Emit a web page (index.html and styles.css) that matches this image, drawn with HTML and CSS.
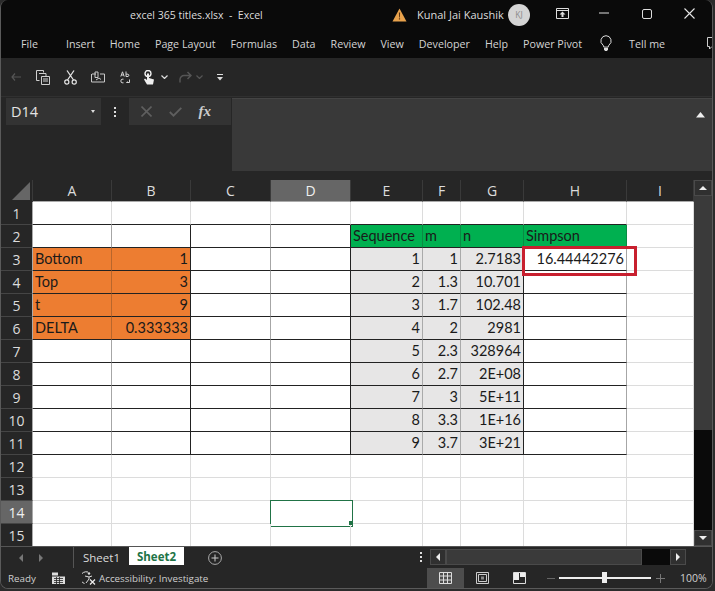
FILE: index.html
```html
<!DOCTYPE html>
<html lang="en">
<head>
<meta charset="utf-8">
<title>excel 365 titles.xlsx - Excel</title>
<link rel="stylesheet" href="styles.css">
</head>
<body>
<div class="window">
  <header class="titlebar">
    <span class="doc-title">excel 365 titles.xlsx&nbsp; -&nbsp; Excel</span>
    <svg class="warn" viewBox="0 0 14 14" width="15" height="14"><path d="M7 0.5L14 13.5H0z" fill="#e8a24c"/><path d="M6.4 4.5h1.2l-.2 5h-.8zM6.4 10.3h1.2v1.3H6.4z" fill="#5a3310"/></svg>
    <span class="user">Kunal Jai Kaushik</span>
    <span class="avatar">KJ</span>
    <svg class="win-ribbon" viewBox="0 0 13 11" width="13" height="11"><path d="M.5.5h12v10H.5zM.5 2.5h12" fill="none" stroke="#ddd"/><path d="M6.5 3.5L9.5 6.5H7.5V9h-2V6.5H3.5z" fill="#ddd"/></svg>
    <svg class="win-min" viewBox="0 0 10 2" width="10" height="2"><path d="M0 1h10" stroke="#ddd"/></svg>
    <svg class="win-max" viewBox="0 0 10 10" width="10" height="10"><rect x=".5" y=".5" width="9" height="9" rx="1.5" fill="none" stroke="#ddd"/></svg>
    <svg class="win-close" viewBox="0 0 11 11" width="11" height="11"><path d="M.5.5l10 10M10.5.5l-10 10" stroke="#e4e4e4" stroke-width="1.1"/></svg>
  </header>
  <nav class="menubar">
    <span class="menu-file">File</span>
    <span>Insert</span><span>Home</span><span>Page Layout</span><span>Formulas</span><span>Data</span><span>Review</span><span>View</span><span>Developer</span><span>Help</span><span>Power Pivot</span>
    <svg class="bulb" viewBox="0 0 12 17" width="12" height="17"><path d="M6 .7a5.2 5.2 0 0 0-3 9.4c.5.5.7 1 .8 2h4.4c.1-1 .3-1.500.8-2A5.2 5.2 0 0 0 6 .7z" fill="none" stroke="#ddd"/><path d="M4 13h4v1.500l-1 1.500H5l-1-1.500z" fill="#ddd"/></svg>
    <span class="tell">Tell me</span>
    <svg class="comment" viewBox="0 0 15 13" width="15" height="13"><path d="M.5.5h14v9H5l-2.500 2.500V9.500H.5z" fill="none" stroke="#ccc"/></svg>
  </nav>
  <div class="qat">
    <svg class="q-back" viewBox="0 0 10 8" width="10" height="8"><path d="M4 .5L1 4l3 3.500M1 4h9" fill="none" stroke="#555" stroke-width="1.200"/></svg>
    <svg class="q-paste" viewBox="0 0 14 15" width="14" height="15"><path d="M.5.500h7v2M.5.500v10h3M3 3.500h5l2 0v3M5.500 6.500h8v8h-8zM7 9h5M7 11h5" fill="none" stroke="#cfcfcf"/></svg>
    <svg class="q-cut" viewBox="0 0 13 15" width="13" height="15"><path d="M3 .5l6.500 9.500M10 .5L3.500 10" stroke="#e4e4e4" stroke-width="1.300" fill="none"/><circle cx="2.800" cy="12" r="2.100" fill="none" stroke="#e4e4e4" stroke-width="1.200"/><circle cx="10.200" cy="12" r="2.100" fill="none" stroke="#e4e4e4" stroke-width="1.200"/></svg>
    <svg class="q-mail" viewBox="0 0 14 12" width="14" height="12"><path d="M1 3h4M9 3h4.500v8H.5V3M5 9l3-2 2 1.500" fill="none" stroke="#c8c8c8"/><path d="M4 1h3v5.500H4z" fill="none" stroke="#c8c8c8"/></svg>
    <svg class="q-abc" viewBox="0 0 10 13" width="10" height="13"><path d="M.8 5.500l1.700-4.700 1.700 4.700M1.300 4h2.400M6 .5v5M6 3.200h2a1.200 1.200 0 0 1 0 2.300H6M3.500 8.200h-1.500c-1.500 0-1.500 3.600 0 3.600h1.500M9.500 8.500v3H6.500l1-1" fill="none" stroke="#d4d4d4"/></svg>
    <svg class="q-touch" viewBox="0 0 11 15" width="11" height="15"><circle cx="5" cy="3.500" r="3" fill="none" stroke="#eee" stroke-width="1.400"/><path d="M4 3.500v6.500L2 8.500 1 9.500l3 5h6l1-5-5-1.500V3.500z" fill="#eee"/></svg>
    <svg class="q-chev" viewBox="0 0 7 4" width="7" height="4"><path d="M.5.500L3.500 3.500 6.500.500" fill="none" stroke="#ddd" stroke-width="1.200"/></svg>
    <svg class="q-redo" viewBox="0 0 14 12" width="14" height="12"><path d="M13 4.500H6a4 4 0 0 0-4 4v3M9.500 1l3.500 3.500L9.500 8" fill="none" stroke="#555" stroke-width="1.500"/></svg>
    <svg class="q-chev2" viewBox="0 0 7 4" width="7" height="4"><path d="M.5.500L3.500 3.500 6.500.500" fill="none" stroke="#555" stroke-width="1.200"/></svg>
    <svg class="q-more" viewBox="0 0 6 7" width="6" height="7"><path d="M0 .5h6" stroke="#ddd"/><path d="M0 3h6L3 6.500z" fill="#ddd"/></svg>
  </div>
  <div class="formula">
    <div class="namebox"><span>D14</span><i class="caret"></i></div>
    <div class="dots"><b></b><b></b><b></b></div>
    <div class="fxgroup">
      <svg viewBox="0 0 11 11" width="11" height="11"><path d="M.5.500l10 10M10.500.500l-10 10" stroke="#5f5f5f" stroke-width="1.600"/></svg>
      <svg viewBox="0 0 13 10" width="13" height="10"><path d="M.8 5l3.700 3.700L12.300.800" fill="none" stroke="#5f5f5f" stroke-width="1.800"/></svg>
      <span class="fx">fx</span>
    </div>
    <div class="input"><svg class="collapse" viewBox="0 0 9 6" width="9" height="6"><path d="M0 5.500L4.500 0 9 5.500z" fill="#eee"/></svg></div>
  </div>
  <main class="sheet-area">
    <div class="grid">
      <div class="corner"><i></i></div>
      <div class="ch">A</div><div class="ch">B</div><div class="ch">C</div><div class="ch active">D</div><div class="ch">E</div><div class="ch">F</div><div class="ch">G</div><div class="ch">H</div><div class="ch">I</div>

      <div class="rh">1</div><div class="c bb"></div><div class="c bb"></div><div class="c bb"></div><div class="c bb"></div><div class="c bb"></div><div class="c bb"></div><div class="c bb"></div><div class="c bb"></div><div class="c"></div>

      <div class="rh">2</div><div class="c bb bg"></div><div class="c bb br"></div><div class="c bb bg"></div><div class="c bb br"></div><div class="c bb gr">Sequence</div><div class="c bb gr">m</div><div class="c bb gr">n</div><div class="c bb gr">Simpson</div><div class="c"></div>

      <div class="rh">3</div><div class="c bb or">Bottom</div><div class="c bb or br num">1</div><div class="c bb bg"></div><div class="c bb br"></div><div class="c bb gy num">1</div><div class="c bb gy num">1</div><div class="c bb gy num br">2.7183</div><div class="c bb bg num result">16.44442276<i class="redbox"></i></div><div class="c"></div>

      <div class="rh">4</div><div class="c bb or">Top</div><div class="c bb or br num">3</div><div class="c bb bg"></div><div class="c bb br"></div><div class="c bb gy num">2</div><div class="c bb gy num">1.3</div><div class="c bb gy num br">10.701</div><div class="c bb bg"></div><div class="c"></div>

      <div class="rh">5</div><div class="c bb or">t</div><div class="c bb or br num">9</div><div class="c bb bg"></div><div class="c bb br"></div><div class="c bb gy num">3</div><div class="c bb gy num">1.7</div><div class="c bb gy num br">102.48</div><div class="c bb bg"></div><div class="c"></div>

      <div class="rh">6</div><div class="c bb or">DELTA</div><div class="c bb or br num">0.333333</div><div class="c bb bg"></div><div class="c bb br"></div><div class="c bb gy num">4</div><div class="c bb gy num">2</div><div class="c bb gy num br">2981</div><div class="c bb bg"></div><div class="c"></div>

      <div class="rh">7</div><div class="c bb bg"></div><div class="c bb br"></div><div class="c bb bg"></div><div class="c bb br"></div><div class="c bb gy num">5</div><div class="c bb gy num">2.3</div><div class="c bb gy num br">328964</div><div class="c bb bg"></div><div class="c"></div>

      <div class="rh">8</div><div class="c bb bg"></div><div class="c bb br"></div><div class="c bb bg"></div><div class="c bb br"></div><div class="c bb gy num">6</div><div class="c bb gy num">2.7</div><div class="c bb gy num br">2E+08</div><div class="c bb bg"></div><div class="c"></div>

      <div class="rh">9</div><div class="c bb bg"></div><div class="c bb br"></div><div class="c bb bg"></div><div class="c bb br"></div><div class="c bb gy num">7</div><div class="c bb gy num">3</div><div class="c bb gy num br">5E+11</div><div class="c bb bg"></div><div class="c"></div>

      <div class="rh">10</div><div class="c bb bg"></div><div class="c bb br"></div><div class="c bb bg"></div><div class="c bb br"></div><div class="c bb gy num">8</div><div class="c bb gy num">3.3</div><div class="c bb gy num br">1E+16</div><div class="c bb bg"></div><div class="c"></div>

      <div class="rh">11</div><div class="c bb bg"></div><div class="c bb br"></div><div class="c bb bg"></div><div class="c bb br"></div><div class="c bb gy num">9</div><div class="c bb gy num">3.7</div><div class="c bb gy num br">3E+21</div><div class="c bb bg"></div><div class="c"></div>

      <div class="rh">12</div><div class="c"></div><div class="c"></div><div class="c"></div><div class="c"></div><div class="c"></div><div class="c"></div><div class="c"></div><div class="c"></div><div class="c"></div>

      <div class="rh">13</div><div class="c"></div><div class="c"></div><div class="c"></div><div class="c"></div><div class="c"></div><div class="c"></div><div class="c"></div><div class="c"></div><div class="c"></div>

      <div class="rh active">14</div><div class="c"></div><div class="c"></div><div class="c"></div><div class="c selected"><i class="handle"></i></div><div class="c"></div><div class="c"></div><div class="c"></div><div class="c"></div><div class="c"></div>

      <div class="rh">15</div><div class="c"></div><div class="c"></div><div class="c"></div><div class="c"></div><div class="c"></div><div class="c"></div><div class="c"></div><div class="c"></div><div class="c"></div>
    </div>
    <div class="vscroll">
      <div class="sbtn"><i class="tri-up"></i></div>
      <div class="vthumb"></div>
      <div class="vrest"></div>
      <div class="sbtn"><i class="tri-down"></i></div>
    </div>
  </main>
  <div class="tabbar">
    <div class="tabnav"><i class="tri-left dim"></i><i class="tri-right dim"></i></div>
    <div class="tab">Sheet1</div>
    <div class="tab current">Sheet2</div>
    <svg class="addsheet" viewBox="0 0 14 14" width="14" height="14"><circle cx="7" cy="7" r="6.400" fill="none" stroke="#aaa"/><path d="M7 3.500v7M3.500 7h7" stroke="#ccc"/></svg>
    <div class="dots splitter"><b></b><b></b><b></b></div>
    <div class="hscroll">
      <div class="sbtn-h"><i class="tri-left"></i></div>
      <div class="hthumb"></div>
      <div class="hrest"></div>
      <div class="sbtn-h"><i class="tri-right"></i></div>
    </div>
  </div>
  <footer class="statusbar">
    <span class="ready">Ready</span>
    <svg class="st-macro" viewBox="0 0 13 12" width="13" height="12"><path d="M0 .5h6v3H0zM0 4.500h13V12H0z" fill="#ddd"/><path d="M2 6.500h9M2 8.500h9M2 10.500h9M4.500 5v7M7.500 5v7" stroke="#262626" stroke-width=".8"/></svg>
    <svg class="st-acc" viewBox="0 0 14 14" width="14" height="14"><path d="M2.500 12.500A6 6 0 0 1 6 1" fill="none" stroke="#ddd"/><circle cx="7" cy="2.500" r="1.200" fill="#ddd"/><path d="M3 5l4 1 3-1M7 6v2l-3 4" fill="none" stroke="#ddd"/><path d="M8 8.500l5 5M13 8.500l-5 5" stroke="#eee" stroke-width="1.200"/></svg>
    <span class="acc-text">Accessibility: Investigate</span>
    <div class="views">
      <div class="view on"><svg viewBox="0 0 13 12" width="13" height="12"><path d="M.5.500h12v11H.5zM4.500.500v11M8.500.500v11M.5 4h12M.5 8h12" fill="none" stroke="#ddd"/></svg></div>
      <div class="view"><svg viewBox="0 0 13 12" width="13" height="12"><path d="M.5.500h12v11H.5zM2.500 2.500h8v7h-8z" fill="none" stroke="#ccc"/><path d="M5 4.500h3v3H5z" fill="#888"/></svg></div>
      <div class="view"><svg viewBox="0 0 13 12" width="13" height="12"><path d="M.5.500h12v11H.5z" fill="none" stroke="#ddd"/><path d="M1 1h5v7H1zM7 1h5v4H7z" fill="#eee"/></svg></div>
    </div>
    <i class="z-minus"></i>
    <div class="slider"><i></i></div>
    <svg class="z-plus" viewBox="0 0 9 9" width="9" height="9"><path d="M4.500 0v9M0 4.500h9" stroke="#777"/></svg>
    <span class="zoom">100%</span>
  </footer>
</div>
</body>
</html>
```
FILE: styles.css
```css
* { box-sizing: border-box; }
html, body { margin: 0; padding: 0; }
body { width: 715px; height: 591px; background: #2b2b2b; overflow: hidden; font-family: "Open Sans", "Noto Sans", sans-serif; }
.window { width: 713px; height: 589px; display: flex; flex-direction: column; background: #262626; border: solid #5a5a5a; border-width: 0 1px 1px 1px; border-radius: 8px; overflow: hidden; color: #ddd; }
svg, i, b { display: block; flex: none; }

/* title bar */
.titlebar { height: 29px; background: #0a0a0a; display: flex; align-items: center; flex: none; font-size: 10.5px; color: #dcdcdc; }
.doc-title { margin-left: 129px; white-space: nowrap; width: 262px; }
.warn { margin-left: 0; }
.user { margin-left: 3px; font-size: 11px; width: 91px; white-space: nowrap; margin-left: 10px; }
.avatar { width: 22px; height: 22px; border-radius: 50%; background: #d4d4d4; color: #8a8a8a; font-size: 8.500px; display: flex; align-items: center; justify-content: center; margin-left: 0; }
.win-ribbon { margin-left: 26px; margin-top: -2px; }
.win-min { margin-left: 30px; margin-top: -3px; }
.win-max { margin-left: 33px; margin-top: -2px; }
.win-close { margin-left: 32px; margin-top: -2px; }

/* menu */
.menubar { height: 29px; background: #0a0a0a; display: flex; align-items: center; gap: 15px; flex: none; font-size: 10.700px; padding-left: 20px; color: #d4d4d4; white-space: nowrap; }
.menu-file { margin-right: 13px; }
.bulb { margin-left: 3px; }
.tell { margin-left: 2px; }
.comment { margin-left: 27px; }

/* quick access */
.qat { height: 39px; background: #262626; border-bottom: 1px solid #303030; position: relative; display: flex; align-items: center; flex: none; padding-left: 10px; }
.q-paste { margin-left: 15px; }
.q-cut { margin-left: 14px; }
.q-mail { margin-left: 14px; }
.q-abc { margin-left: 15px; }
.q-touch { margin-left: 13px; }
.q-chev { margin-left: 7px; }
.q-redo { margin-left: 10px; }
.q-chev2 { margin-left: 4px; }
.q-more { margin-left: 14px; }

/* formula bar */
.formula { height: 83px; flex: none; display: flex; align-items: flex-start; background: #262626; padding: 1px 0 0 5px; }
.namebox { width: 95px; height: 27px; background: #333; display: flex; align-items: center; justify-content: space-between; padding: 0 6px 0 5px; font-size: 14.500px; color: #e4e4e4; }
.caret { width: 0; height: 0; border: 2.500px solid transparent; border-top: 3px solid #ddd; border-bottom: 0; }
.dots { display: flex; flex-direction: column; gap: 2px; width: 28px; height: 27px; align-items: center; justify-content: center; }
.dots b { width: 2px; height: 2px; background: #ddd; }
.fxgroup { width: 103px; height: 27px; background: #333; display: flex; align-items: center; gap: 17px; padding-left: 12px; }
.fx { font-family: "Liberation Serif", serif; font-style: italic; font-weight: bold; font-size: 15px; color: #ccc; }
.input { width: 482px; height: 73px; margin-left: 1px; background: #393939; border-top: 1px solid #444; position: relative; }
.collapse { position: absolute; right: 7px; top: 13px; }

/* sheet */
.sheet-area { height: 366px; display: flex; flex: none; overflow: hidden; background: #0a0a0a; }
.grid { width: 693px; height: 366px; display: grid; grid-template-columns: 32px 79px 79px 80px 80px 72px 38px 63px 103px 67px; grid-template-rows: 22px repeat(15, 23px); background: #fff; overflow: hidden; flex: none; font-family: "Lato", "Liberation Sans", sans-serif; font-size: 14.500px; color: #1a1a1a; }
.corner { background: #262626; border-right: 1px solid #3a3a3a; position: relative; }
.corner i { position: absolute; right: 2px; bottom: 2px; border-style: solid; border-width: 0 0 18px 18px; border-color: transparent transparent #666 transparent; }
.ch, .rh { background: #262626; color: #dcdcdc; font-family: "Open Sans", sans-serif; display: flex; align-items: center; justify-content: center; font-size: 14px; }
.ch { border-right: 1px solid #3a3a3a; border-bottom: 1px solid #aaa; }
.rh { border-bottom: 1px solid #454545; border-right: 1px solid #aaa; }
.ch.active, .rh.active { background: #666; color: #f0f0f0; }
.c { border-right: 1px solid #dcdcdc; border-bottom: 1px solid #dcdcdc; padding: 0 2px; display: flex; align-items: center; white-space: nowrap; line-height: 22px; position: relative; min-width: 0; }
.c.bb { border-bottom-color: #222; }
.c.br { border-right-color: #222; }
.c.bg { border-right: 1px solid #a6a6a6; }
.num { justify-content: flex-end; }
.or { background: #ed7d31; border-right-color: #b8662c; }
.gr { background: #00b050; border-right-color: #0a8a44; }
.gy { background: #e7e6e6; border-right-color: #aaa; }
.redbox { position: absolute; left: -2px; top: -2px; width: 115px; height: 30px; border: 3px solid #c8202f; z-index: 2; }
.selected { border: 0; }
.selected::after { content: ""; position: absolute; left: -1px; top: -1px; width: 81px; height: 25px; border: 1px solid #217346; border-width: 1.500px; }
.handle { position: absolute; right: -2px; bottom: -1px; width: 4px; height: 4px; background: #217346; z-index: 1; }

/* scrollbars */
.vscroll { width: 18px; display: flex; flex-direction: column; flex: none; background: #0a0a0a; }
.sbtn { height: 16px; flex: none; background: #303030; border: 1px solid #4a4a4a; display: flex; align-items: center; justify-content: center; }
.vthumb { height: 234px; flex: none; background: #3a3a3a; }
.vrest { flex: 1; }
.tri-up { border: 4px solid transparent; border-top: 0; border-bottom: 4px solid #eee; }
.tri-down { border: 4px solid transparent; border-bottom: 0; border-top: 4px solid #eee; }
.tri-left { border: 4px solid transparent; border-left: 0; border-right: 4px solid #eee; }
.tri-right { border: 4px solid transparent; border-right: 0; border-left: 4px solid #eee; }
.tri-left.dim { border-right-color: #777; }
.tri-right.dim { border-left-color: #777; }

/* tabs */
.tabbar { height: 22px; flex: none; display: flex; align-items: stretch; background: #262626; border-top: 1px solid #555; font-size: 11px; }
.tabnav { width: 73px; display: flex; align-items: center; gap: 16px; padding-left: 18px; border-right: 1px solid #555; }
.tab { width: 55px; display: flex; align-items: center; justify-content: center; color: #dcdcdc; font-size: 11.500px; }
.tab.current { background: #fff; color: #217346; font-weight: 700; height: 18px; }
.addsheet { align-self: center; margin-left: 24px; }
.splitter { margin-left: 197px; width: 4px; height: 20px; }
.hscroll { display: flex; margin-left: 7px; width: 256px; height: 16px; margin-top: 2px; background: #0a0a0a; }
.sbtn-h { width: 16px; flex: none; background: #303030; border: 1px solid #4a4a4a; display: flex; align-items: center; justify-content: center; }
.hthumb { width: 196px; flex: none; background: #3a3a3a; border: 1px solid #4a4a4a; }
.hrest { flex: 1; }

/* status */
.statusbar { flex: 1; display: flex; align-items: center; background: #262626; font-size: 9.800px; color: #cfcfcf; }
.ready { margin-left: 7px; width: 44px; }
.st-acc { margin-left: 17px; }
.acc-text { margin-left: 3px; width: 328px; white-space: nowrap; }
.views { display: flex; align-self: stretch; }
.view { width: 37px; display: flex; align-items: center; justify-content: center; }
.view.on { background: #4d4d4d; }
.z-minus { width: 8px; height: 1px; background: #666; margin-left: 9px; }
.slider { width: 92px; height: 1.500px; background: #eee; margin-left: 4px; position: relative; }
.slider i { position: absolute; left: 43px; top: -5px; width: 5px; height: 11px; background: #eee; }
.z-plus { margin-left: 5px; }
.zoom { margin-left: 15px; font-size: 10.500px; }
```
